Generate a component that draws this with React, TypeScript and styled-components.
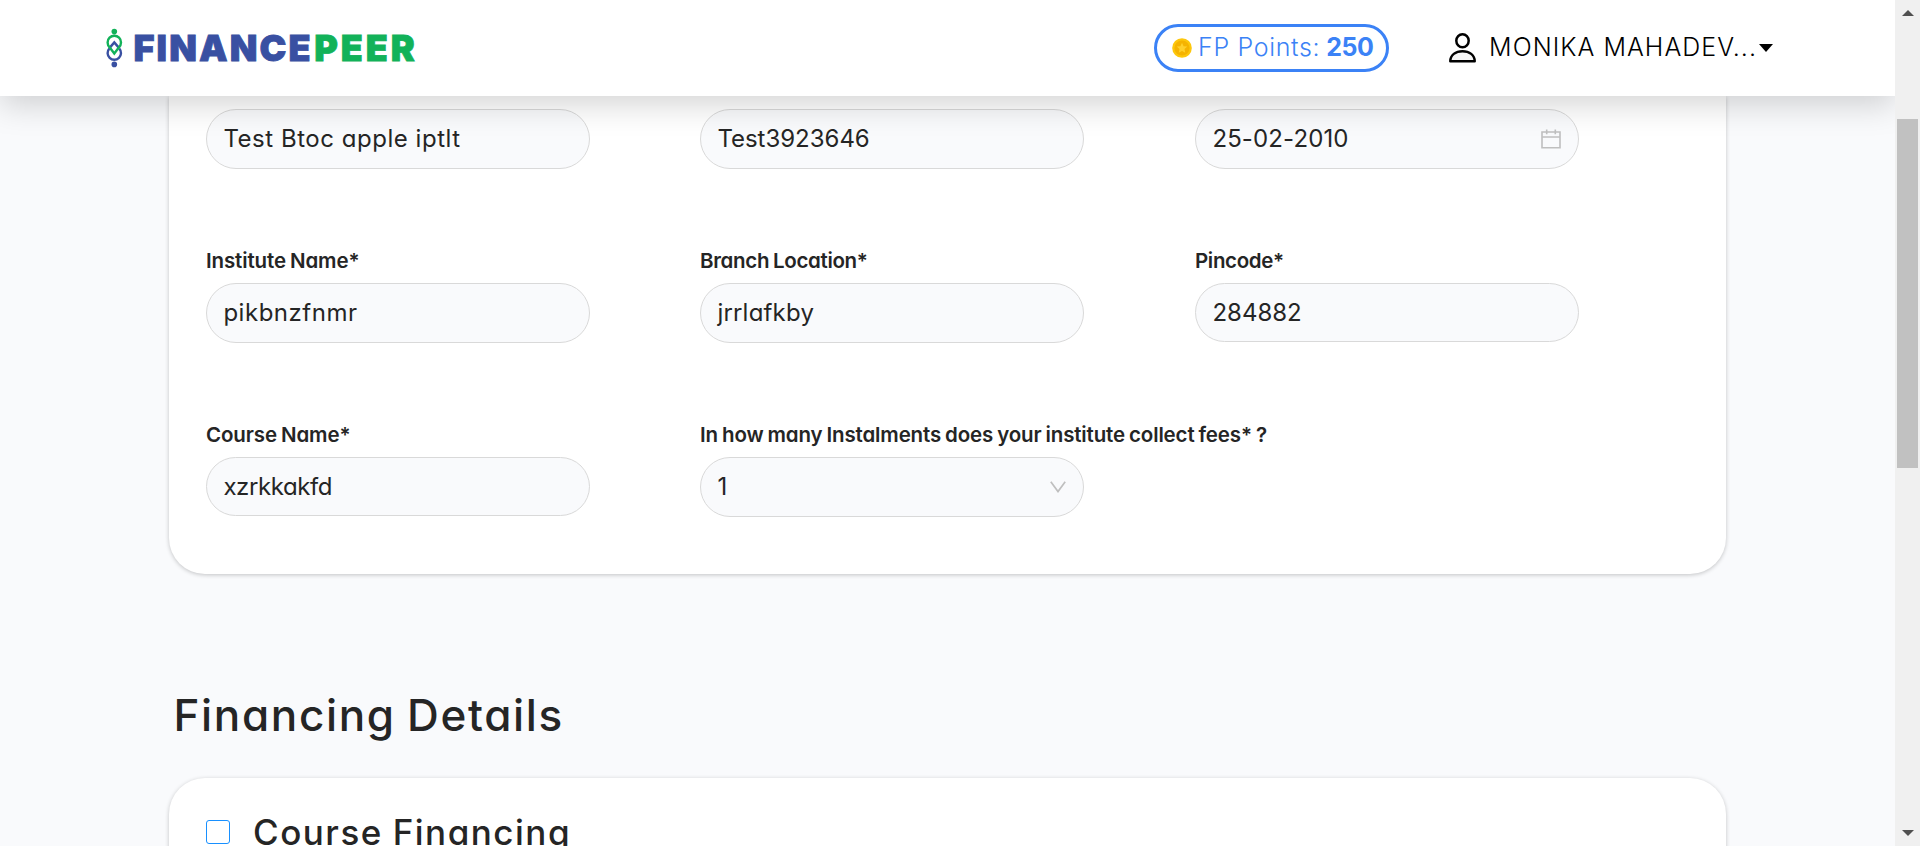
import React from 'react';
import styled, { createGlobalStyle } from 'styled-components';

const GlobalStyle = createGlobalStyle`
  * { box-sizing: border-box; }
  html, body { margin: 0; padding: 0; overflow: hidden; }
  body { font-family: Inter, sans-serif; color: #252525; }
`;

const Screen = styled.div`
  display: flex;
  width: 1920px;
  height: 846px;
  overflow: hidden;
`;

const Page = styled.div`
  flex: 1;
  display: flex;
  flex-direction: column;
  overflow: hidden;
  background: #f9fafc;
`;

const Header = styled.header`
  position: relative;
  z-index: 2;
  flex: none;
  display: flex;
  align-items: center;
  justify-content: space-between;
  height: 96px;
  padding: 0 122px 0 106px;
  background: #fff;
  box-shadow: 0 9px 30px rgba(0, 0, 0, 0.17);
`;

const Brand = styled.div`
  display: flex;
  align-items: center;
  height: 96px;
`;

const BrandWord = styled.span<{ $tone: string; $gap: number; $spacing: number }>`
  margin-left: ${(p) => p.$gap}px;
  color: ${(p) => p.$tone};
  font-size: 36px;
  font-weight: 900;
  line-height: 96px;
  letter-spacing: ${(p) => p.$spacing}px;
  -webkit-text-stroke: 0.8px ${(p) => p.$tone};
`;

const Account = styled.div`
  display: flex;
  align-items: center;
`;

const Points = styled.div`
  display: flex;
  align-items: center;
  width: 235px;
  height: 48px;
  padding-left: 15px;
  border: 3px solid #3b82f6;
  border-radius: 24px;
  color: #3b82f6;
  font-size: 25px;
  font-weight: 360;
  line-height: 42px;
  white-space: pre;
`;

const PointsLabel = styled.span`
  margin: -3px 0 0 6px;
  letter-spacing: 0.65px;
`;

const PointsValue = styled.b`
  margin: -3px 0 0 6px;
  font-weight: 700;
  letter-spacing: -0.5px;
`;

const User = styled.div`
  display: flex;
  align-items: center;
  margin-left: 60px;
  color: #000;
`;

const UserName = styled.span`
  margin: -3px 0 0 13px;
  font-size: 25px;
  font-weight: 330;
  line-height: 42px;
  letter-spacing: 1.04px;
`;

const Caret = styled.span`
  margin-left: 2px;
  border: 7px solid transparent;
  border-top: 8px solid #000;
  border-bottom: 0;
`;

const Card = styled.section<{ $continued?: boolean }>`
  flex: none;
  width: 1557px;
  margin-left: 169px;
  padding: ${(p) => (p.$continued ? '13px 37px 57px' : '30px 37px')};
  border-radius: ${(p) => (p.$continued ? '0 0 36px 36px' : '36px')};
  background: #fff;
  box-shadow: 0 1px 4px rgba(0, 0, 0, 0.22);
`;

const FieldGrid = styled.div`
  display: grid;
  grid-template-columns: 494px 495px 384px;
  row-gap: 76px;
`;

const Field = styled.div`
  display: flex;
  flex-direction: column;
`;

const Label = styled.label<{ $spacing: number }>`
  height: 30px;
  margin-bottom: 8px;
  font-size: 20.5px;
  font-weight: 570;
  line-height: 32px;
  letter-spacing: ${(p) => p.$spacing}px;
  word-spacing: -1px;
  font-feature-settings: 'cv11';
  white-space: nowrap;
`;

const Control = styled.div<{ $spacing: number; $short?: boolean }>`
  display: flex;
  align-items: center;
  justify-content: space-between;
  width: 384px;
  height: ${(p) => (p.$short ? 59 : 60)}px;
  padding: 0 17px 1px 16.4px;
  border: 1px solid #d9d9d9;
  border-radius: 30px;
  background: #f9fafc;
  font-size: 24px;
  font-weight: 370;
  letter-spacing: ${(p) => p.$spacing}px;
  font-feature-settings: 'cv11';
`;

const Title = styled.h1`
  flex: none;
  height: 60px;
  margin: 111px 0 33px 173.5px;
  font-size: 44px;
  font-weight: 480;
  line-height: 60px;
  letter-spacing: 1.65px;
  word-spacing: -2px;
  font-feature-settings: 'cv11';
`;

const CheckRow = styled.label`
  display: flex;
  align-items: center;
  gap: 23px;
  height: 48px;
  font-size: 35px;
  font-weight: 460;
  letter-spacing: 1.5px;
  word-spacing: -1px;
  font-feature-settings: 'cv11';
`;

const CheckBox = styled.span`
  width: 24px;
  height: 24px;
  border: 1px solid #1890ff;
  border-radius: 3px;
  background: #fff;
`;

const ScrollTrack = styled.div`
  position: relative;
  z-index: 3;
  flex: none;
  display: flex;
  flex-direction: column;
  align-items: center;
  width: 25px;
  padding: 10px 0;
  background: #f0f0f0;
`;

const ScrollThumb = styled.div`
  width: 21px;
  height: 349px;
  margin: 103px 0 auto;
  background: #c1c1c1;
`;

const ScrollArrow = styled.span<{ $down?: boolean }>`
  border: 5.5px solid transparent;
  border-width: ${(p) => (p.$down ? '6px 6px 0' : '0 6px 6px')};
  border-${(p) => (p.$down ? 'top' : 'bottom')}-color: #505050;
`;

function BrandMark() {
  return (
    <svg width="17" height="40" viewBox="0 0 17 40" fill="none" strokeWidth="2.4">
      <circle cx="8.3" cy="3.6" r="2.8" fill="#12b259" />
      <circle cx="8.3" cy="36.4" r="2.8" fill="#3950a2" />
      <path d="M3.3 20.6A6.7 6.7 0 1 0 13.3 20.6" stroke="#3950a2" />
      <path d="M3.2 20.4L8.3 14.4L13.4 20.4" stroke="#3950a2" />
      <path d="M3.6 19.2A6.7 6.7 0 1 1 13 19.2" stroke="#12b259" />
      <path d="M3.4 19L8.3 25.5L13.2 19" stroke="#12b259" />
    </svg>
  );
}

function Coin() {
  return (
    <svg width="20" height="20" viewBox="0 0 20 20">
      <circle cx="10" cy="10" r="9.8" fill="#fdc70c" />
      <circle cx="10" cy="10" r="7.6" fill="#f5b301" />
      <path d="M10 4.8l1.6 3.4 3.7.4-2.8 2.5.8 3.7-3.3-1.9-3.3 1.9.8-3.7-2.8-2.5 3.7-.4z" fill="#ffd02b" />
    </svg>
  );
}

function Person() {
  return (
    <svg width="27" height="30" viewBox="0 0 27 30" fill="none" stroke="#000" strokeWidth="2.5">
      <ellipse cx="13.5" cy="7.8" rx="6.2" ry="6.5" />
      <path d="M1.3 28.2C1.3 22 6.6 18.2 13.5 18.2S25.7 22 25.7 28.2Z" fill="#f5f5f5" strokeLinejoin="round" />
    </svg>
  );
}

function Calendar() {
  return (
    <svg width="20" height="20" viewBox="0 0 20 20" fill="none" stroke="#bfbfbf" strokeWidth="1.6">
      <path d="M1 3H19V18.8H1ZM1 8H19M5.7 .5V5.2M14.3 .5V5.2" />
    </svg>
  );
}

function Chevron() {
  return (
    <svg width="16" height="12" viewBox="0 0 16 12" fill="none" stroke="#bfbfbf" strokeWidth="1.7">
      <path d="M.8 .8L8 10.6L15.2 .8" />
    </svg>
  );
}

export default function App() {
  return (
    <Screen>
      <GlobalStyle />
      <Page>
        <Header>
          <Brand>
            <BrandMark />
            <BrandWord $tone="#3950a2" $gap={10.5} $spacing={2.1}>FINANCE</BrandWord>
            <BrandWord $tone="#12b259" $gap={1.5} $spacing={2.9}>PEER</BrandWord>
          </Brand>
          <Account>
            <Points>
              <Coin />
              <PointsLabel>FP Points:</PointsLabel>
              <PointsValue>250</PointsValue>
            </Points>
            <User>
              <Person />
              <UserName>MONIKA MAHADEV...</UserName>
              <Caret />
            </User>
          </Account>
        </Header>

        <Card $continued>
          <FieldGrid>
            <Control $spacing={0.53}>Test Btoc apple iptlt</Control>
            <Control $spacing={-0.02}>Test3923646</Control>
            <Control $spacing={0.12}>
              25-02-2010
              <Calendar />
            </Control>
            <Field>
              <Label $spacing={-0.12}>Institute Name*</Label>
              <Control $spacing={0.52}>pikbnzfnmr</Control>
            </Field>
            <Field>
              <Label $spacing={-0.32}>Branch Location*</Label>
              <Control $spacing={0.2}>jrrlafkby</Control>
            </Field>
            <Field>
              <Label $spacing={-0.35}>Pincode*</Label>
              <Control $spacing={0} $short>284882</Control>
            </Field>
            <Field>
              <Label $spacing={-0.12}>Course Name*</Label>
              <Control $spacing={-0.4} $short>xzrkkakfd</Control>
            </Field>
            <Field>
              <Label $spacing={-0.14}>In how many Instalments does your institute collect fees* ?</Label>
              <Control $spacing={0}>
                1
                <Chevron />
              </Control>
            </Field>
          </FieldGrid>
        </Card>

        <Title>Financing Details</Title>

        <Card>
          <CheckRow>
            <CheckBox />
            Course Financing
          </CheckRow>
        </Card>
      </Page>
      <ScrollTrack>
        <ScrollArrow />
        <ScrollThumb />
        <ScrollArrow $down />
      </ScrollTrack>
    </Screen>
  );
}
